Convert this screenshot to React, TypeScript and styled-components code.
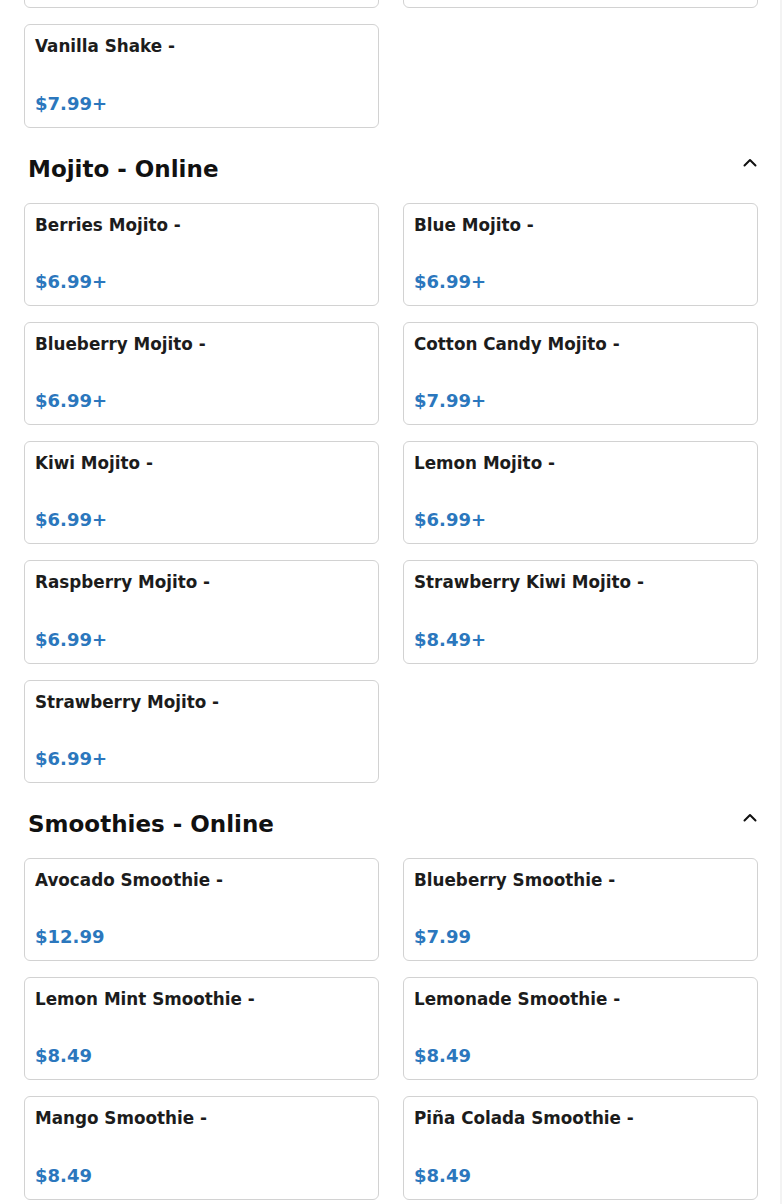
import { createGlobalStyle } from 'styled-components';
import styled from 'styled-components';

type Item = { name: string; price: string };
type Section = { title: string; items: Item[]; hiddenRow?: boolean };

const sections: Section[] = [
  {
    title: '',
    hiddenRow: true,
    items: [{ name: 'Vanilla Shake -', price: '$7.99+' }],
  },
  {
    title: 'Mojito - Online',
    items: [
      { name: 'Berries Mojito -', price: '$6.99+' },
      { name: 'Blue Mojito -', price: '$6.99+' },
      { name: 'Blueberry Mojito -', price: '$6.99+' },
      { name: 'Cotton Candy Mojito -', price: '$7.99+' },
      { name: 'Kiwi Mojito -', price: '$6.99+' },
      { name: 'Lemon Mojito -', price: '$6.99+' },
      { name: 'Raspberry Mojito -', price: '$6.99+' },
      { name: 'Strawberry Kiwi Mojito -', price: '$8.49+' },
      { name: 'Strawberry Mojito -', price: '$6.99+' },
    ],
  },
  {
    title: 'Smoothies - Online',
    items: [
      { name: 'Avocado Smoothie -', price: '$12.99' },
      { name: 'Blueberry Smoothie -', price: '$7.99' },
      { name: 'Lemon Mint Smoothie -', price: '$8.49' },
      { name: 'Lemonade Smoothie -', price: '$8.49' },
      { name: 'Mango Smoothie -', price: '$8.49' },
      { name: 'Piña Colada Smoothie -', price: '$8.49' },
    ],
  },
];

const GlobalStyle = createGlobalStyle`
  html, body {
    margin: 0;
    padding: 0;
    background: #ffffff;
    font-family: 'DejaVu Sans', 'Noto Sans', sans-serif;
    overflow: hidden;
  }
`;

const Page = styled.div`
  box-sizing: border-box;
  width: 782px;
  padding: 0 24px 24px;
  box-shadow: inset -2px 0 0 #f3f3f3;
  min-height: 1204px;
`;

const Grid = styled.div<{ $shift?: boolean }>`
  display: grid;
  grid-template-columns: 1fr 1fr;
  column-gap: 24px;
  row-gap: 16px;
  margin-top: ${(p) => (p.$shift ? '-95px' : '0')};
`;

const Header = styled.div`
  display: flex;
  justify-content: space-between;
  align-items: flex-start;
  padding: 0 0 0 4px;
  margin: 27px 0 20px;
`;

const Heading = styled.h2`
  margin: 0;
  font-size: 23px;
  line-height: 28px;
  font-weight: 700;
  color: #111111;
`;

const Toggle = styled.span`
  display: flex;
  width: 16px;
  height: 16px;
  color: #111111;
`;

const Card = styled.div`
  box-sizing: border-box;
  height: 103.25px;
  border: 1px solid #d2d2d2;
  border-radius: 6px;
  padding: 10px 10px 12px;
  display: flex;
  flex-direction: column;
`;

const Name = styled.div`
  font-size: 16.8px;
  line-height: 22px;
  font-weight: 700;
  color: #1c1c1c;
`;

const Price = styled.div`
  margin-top: auto;
  font-size: 18px;
  line-height: 22px;
  font-weight: 700;
  color: #2b77bd;
`;

const Chevron = () => (
  <svg width="16" height="16" viewBox="0 0 16 16" fill="none">
    <path d="M2.5 10.5 L8 5 L13.5 10.5" stroke="currentColor" strokeWidth="2" strokeLinecap="round" strokeLinejoin="round" />
  </svg>
);

export default function App() {
  return (
    <Page>
      <GlobalStyle />
      {sections.map((s, i) => (
        <div key={i}>
          {s.title && (
            <Header>
              <Heading>{s.title}</Heading>
              <Toggle>
                <Chevron />
              </Toggle>
            </Header>
          )}
          <Grid $shift={s.hiddenRow}>
            {/* row scrolled out of view above the fold */}
            {s.hiddenRow && (
              <>
                <Card />
                <Card />
              </>
            )}
            {s.items.map((it) => (
              <Card key={it.name}>
                <Name>{it.name}</Name>
                <Price>{it.price}</Price>
              </Card>
            ))}
          </Grid>
        </div>
      ))}
    </Page>
  );
}
